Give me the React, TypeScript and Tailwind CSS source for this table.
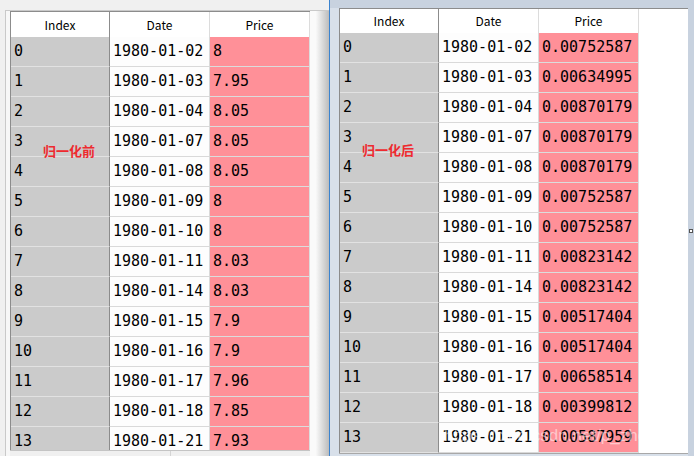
import { Fragment } from 'react'

const DATES = [
  '1980-01-02', '1980-01-03', '1980-01-04', '1980-01-07', '1980-01-08',
  '1980-01-09', '1980-01-10', '1980-01-11', '1980-01-14', '1980-01-15',
  '1980-01-16', '1980-01-17', '1980-01-18', '1980-01-21',
]

const BEFORE = ['8', '7.95', '8.05', '8.05', '8.05', '8', '8', '8.03', '8.03', '7.9', '7.9', '7.96', '7.85', '7.93']

const AFTER = [
  '0.00752587', '0.00634995', '0.00870179', '0.00870179', '0.00870179',
  '0.00752587', '0.00752587', '0.00823142', '0.00823142', '0.00517404',
  '0.00517404', '0.00658514', '0.00399812', '0.00587959',
]

const mono = "font-['DejaVu_Sans_Mono',monospace] text-[15px] text-black"
const ui = "font-['Noto_Sans_CJK_SC','Noto_Sans',sans-serif] text-[12px] text-black"

interface TableProps {
  prices: string[]
  headerHeight: string
}

// Dataframe grid: Index / Date / Price
function FrameTable({ prices, headerHeight }: TableProps) {
  return (
    <div className="flex flex-col border-l border-t border-[#8c8c8c]">
      <div className={`flex ${headerHeight}`}>
        <div className={`w-[99px] flex items-center justify-center bg-white border-r border-[#8c8c8c] ${ui}`}>Index</div>
        <div className={`w-[100px] flex items-center justify-center bg-white border-r border-[#dcdcdc] ${ui}`}>Date</div>
        <div className={`w-[100px] flex items-center justify-center bg-white border-r border-[#dcdcdc] ${ui}`}>Price</div>
      </div>
      {prices.map((p, i) => (
        <Fragment key={i}>
          <div className="flex h-[30px]">
            <div className={`w-[99px] flex items-center pl-[3px] bg-[#cbcbcb] border-r border-[#8c8c8c] border-b border-b-[#e2e2e2] ${mono}`}>
              {i}
            </div>
            <div className={`w-[100px] flex items-center pl-[3px] bg-[#fdfdfd] border-r border-b border-[#d9d9d9] ${mono}`}>
              {DATES[i]}
            </div>
            <div className={`w-[100px] flex items-center pl-[3px] bg-[#ff9098] border-r border-b border-[#dcdcdc] ${mono}`}>
              {p}
            </div>
          </div>
        </Fragment>
      ))}
    </div>
  )
}

export default function App() {
  return (
    <div className="relative flex w-[694px] h-[456px] overflow-hidden bg-[#f0f0f0]">
      {/* left window: before normalisation */}
      <div className="flex flex-col w-[329px] h-full bg-[#f0f0f0]">
        <div className="h-[10px] shrink-0" />
        <div className="flex flex-1 min-h-0 ml-[5px] border-l border-t border-[#c9c9c9]">
          <div className="w-[4px] shrink-0 bg-[#f7f7f7]" />
          <div className="flex flex-col">
            <div className="flex-1 min-h-0 overflow-hidden">
              <FrameTable prices={BEFORE} headerHeight="h-[25px]" />
            </div>
            <div className="h-[6px] shrink-0 border-t border-[#c4c4c4] bg-[#f0f0f0] flex">
              <div className="w-[161px] border-r border-[#d4d4d4]" />
            </div>
          </div>
          <div className="flex-1 bg-[linear-gradient(to_right,#fafafa_30%,#bcbcbc)]" />
        </div>
      </div>

      {/* right window: after normalisation */}
      <div className="flex flex-col flex-1 h-full border-l border-[#3b83cf] bg-[#c8d2df]">
        <div className="h-[8px] shrink-0" />
        <div className="flex flex-1 min-h-0">
          <div className="w-[9px] shrink-0 bg-[#d8e0ea]" />
          <div className="flex flex-col flex-1 min-w-0 bg-white">
            <div className="flex-1 min-h-0 overflow-hidden">
              <FrameTable prices={AFTER} headerHeight="h-[24px]" />
            </div>
            <div className="h-[3px] shrink-0 border-t border-[#a8a8a8] bg-[#d8e0ea]" />
          </div>
          <div className="w-[6px] shrink-0 bg-[#c8d2df]" />
        </div>
      </div>

      {/* annotations */}
      <div className="absolute left-[43px] top-[144px] font-['Noto_Sans_CJK_SC',sans-serif] text-[13px] font-bold text-[#ee2a2f] leading-none">
        归一化前
      </div>
      <div className="absolute left-[362px] top-[143px] font-['Noto_Sans_CJK_SC',sans-serif] text-[13px] font-bold text-[#ee2a2f] leading-none">
        归一化后
      </div>

      {/* resize grip */}
      <div className="absolute left-[689px] top-[229px] w-[4px] h-[4px] border border-[#555] bg-white" />

      {/* watermark */}
      <div className="absolute right-[9px] top-[427px] font-['Liberation_Sans',sans-serif] text-[17px] text-white/50 leading-none">
        https://blog.csdn.net/p_zhou256
      </div>
    </div>
  )
}
